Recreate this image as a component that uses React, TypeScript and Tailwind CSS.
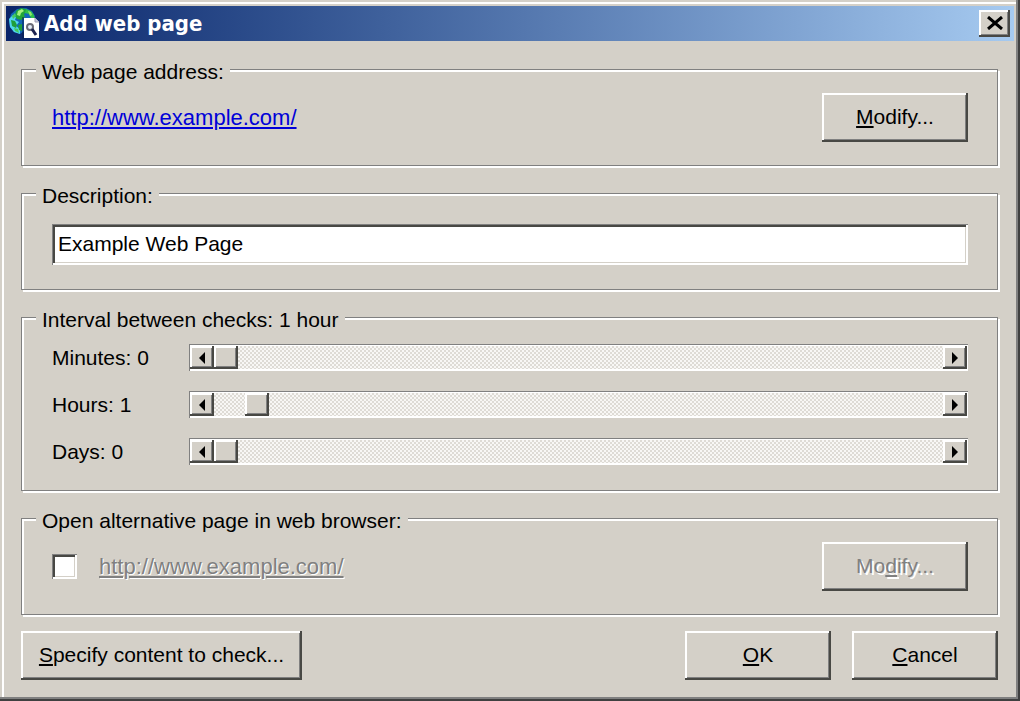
import React, { useState } from 'react'

const raised = "bg-[#d4d0c8] shadow-[inset_-2px_-2px_0_#484844,inset_2px_2px_0_#fff,inset_-3px_-3px_0_#808080]"
const sunken = "shadow-[inset_1px_1px_0_#808080,inset_-2px_-2px_0_#fff,inset_3px_3px_0_#484844,inset_-3px_-3px_0_#d4d0c8]"
const btn = "h-[49px] pb-[2px] flex items-center justify-center leading-[24px]"

const GlobeIcon = () => (
  <svg className="w-[32px] h-[32px] shrink-0" viewBox="0 0 32 32" aria-hidden="true">
    <path d="M9 1l9-1 6 3 3 5-1 3H17l-1 12-4 3-6-2-4-5-1-6 2-7z" fill="#1268b8" />
    <path d="M1 11l4-4 3 2-1 3 4 2-3 4 4 3v5l-6-2-4-5z" fill="#4fd6ee" />
    <path d="M8 3l5-3 5 1 1 3-3 2 1 3-4 3-4-1-2-3z" fill="#22a63a" />
    <path d="M10 3l4-2 2 2-3 2-1 3-3-1z" fill="#a5f07f" />
    <path d="M18 1l5 2 3 4 1 4-4-1-2-4-4-1z" fill="#2fc04a" />
    <path d="M20 3l3 1 1 3-2 1z" fill="#8fe86c" />
    <path d="M3 12l4 1 2 4-1 3-4-2zM10 17l4-1v7l-3-1z" fill="#1f9e3b" />
    <path d="M4 8l3-3 1 3-3 3zM6 20l4 1 1 4-4-2z" fill="#43c962" />
    <path d="M15 31V9" stroke="#071f4d" strokeWidth="1" />
    <path d="M16 10h11l4 4v16H16z" fill="#fff" />
    <path d="M27 10v4h4" fill="#c9c9da" stroke="#9a9ab2" />
    <circle cx="22" cy="19" r="3" fill="#e4ecfa" stroke="#6b6b76" strokeWidth="2" />
    <path d="M24 21l4 6" stroke="#1c2250" strokeWidth="3" />
  </svg>
)

const Arrow = ({ right = false }) => (
  <svg className="w-[8px] h-[12px]" viewBox="0 0 8 12" aria-hidden="true">
    <path d={right ? "M1 0l6 6-6 6z" : "M7 0L1 6l6 6z"} fill="#000" />
  </svg>
)

function Group({ title, className, children }: { title: string; className: string; children: React.ReactNode }) {
  return (
    <fieldset className={`min-w-0 border border-[#808080] shadow-[2px_2px_0_#fff,inset_2px_2px_0_#fff] pl-[30px] pr-[29px] ${className}`}>
      {/* the rule runs a bit above the middle of the caption */}
      <legend className="-ml-4 px-[6px] h-[18px] leading-[24px] bg-[#d4d0c8]">{title}</legend>
      {children}
    </fieldset>
  )
}

function Scroller({ name, max, start }: { name: string; max: number; start: number }) {
  const [value, setValue] = useState(start)
  return (
    <div className="flex items-center h-[27px]">
      <label htmlFor={name} className="w-[137px] leading-[24px]">{name}: {value}</label>
      <div className="flex flex-1 h-[27px] pt-[1px] pb-[2px] pr-[1px] bg-white border-t border-l border-[#808080]">
        <button type="button" aria-label={`Fewer ${name}`} onClick={() => setValue(Math.max(0, value - 1))} className={`w-[24px] h-full flex items-center justify-center ${raised}`}>
          <Arrow />
        </button>
        <input
          id={name}
          type="range"
          min={0}
          max={max}
          value={value}
          onChange={(e) => setValue(Number(e.target.value))}
          className="flex-1 min-w-0 h-full appearance-none bg-[repeating-conic-gradient(#dedbd5_0_25%,#f8f7f5_0_50%)] bg-[length:4px_4px] [&::-webkit-slider-thumb]:appearance-none [&::-webkit-slider-thumb]:w-[24px] [&::-webkit-slider-thumb]:h-[23px] [&::-webkit-slider-thumb]:bg-[#d4d0c8] [&::-webkit-slider-thumb]:shadow-[inset_-2px_-2px_0_#484844,inset_2px_2px_0_#fff,inset_-3px_-3px_0_#808080]"
        />
        <button type="button" aria-label={`More ${name}`} onClick={() => setValue(Math.min(max, value + 1))} className={`w-[24px] h-full flex items-center justify-center ${raised}`}>
          <Arrow right />
        </button>
      </div>
    </div>
  )
}

export default function App() {
  return (
    <div className="min-h-screen p-[6px] bg-[#d4d0c8] text-black text-[21px] font-['Liberation_Sans',Arial,sans-serif] shadow-[inset_-2px_-2px_0_#404040,inset_-4px_-4px_0_#808080,inset_2px_2px_0_#d4d0c8,inset_4px_4px_0_#fff]">
      <div className="flex items-center h-[35px] pl-[2px] pr-1 bg-linear-to-r from-[#0a246a] to-[#a6caf0]">
        <GlobeIcon />
        <h1 className="flex-1 pl-1 text-[22px] leading-[28px] font-bold text-white font-['DejaVu_Sans_Condensed','DejaVu_Sans',sans-serif]">Add web page</h1>
        <button type="button" aria-label="Close" className={`w-[31px] h-[27px] pb-[2px] flex items-center justify-center ${raised}`}>
          <svg className="w-[16px] h-[14px]" viewBox="0 0 16 14" aria-hidden="true">
            <path d="M1 1l14 12M15 1L1 13" stroke="#000" strokeWidth="3" />
          </svg>
        </button>
      </div>

      <form className="pl-[15px] pr-4 pt-[19px]" onSubmit={(e) => e.preventDefault()}>
        <Group title="Web page address:" className="h-[106px]">
          <div className="flex items-center justify-between pt-[15px]">
            <a href="http://www.example.com/" className="text-[22px] leading-[24px] text-[#0000d8] underline">http://www.example.com/</a>
            <button type="button" className={`w-[146px] ${btn} ${raised}`}><u>M</u>odify...</button>
          </div>
        </Group>

        <Group title="Description:" className="h-[106px] mt-[18px]">
          <input
            type="text"
            aria-label="Description"
            defaultValue="Example Web Page"
            className={`w-full h-[41px] mt-[22px] pl-[6px] pb-[2px] bg-white ${sunken}`}
          />
        </Group>

        <Group title="Interval between checks: 1 hour" className="h-[183px] mt-[18px]">
          <div className="flex flex-col gap-5 pt-[18px]">
            <Scroller name="Minutes" max={59} start={0} />
            <Scroller name="Hours" max={23} start={1} />
            <Scroller name="Days" max={30} start={0} />
          </div>
        </Group>

        <Group title="Open alternative page in web browser:" className="h-[106px] mt-[18px]">
          <div className="flex items-center pt-[15px]">
            <input id="alternative" type="checkbox" className={`appearance-none w-[25px] h-[25px] bg-white ${sunken}`} />
            <label htmlFor="alternative" className="flex-1 pl-[22px] text-[22px] leading-[24px] text-[#808080] underline [text-shadow:1px_1px_0_#fff]">http://www.example.com/</label>
            <button type="button" disabled className={`w-[146px] text-[#808080] [text-shadow:2px_2px_0_#fff] ${btn} ${raised}`}>Mo<u>d</u>ify...</button>
          </div>
        </Group>

        <div className="flex gap-[21px] pt-4">
          <button type="button" className={`w-[281px] mr-auto ${btn} ${raised}`}><u>S</u>pecify content to check...</button>
          <button type="submit" className={`w-[146px] ${btn} ${raised}`}><u>O</u>K</button>
          <button type="button" className={`w-[146px] ${btn} ${raised}`}><u>C</u>ancel</button>
        </div>
      </form>
    </div>
  )
}
